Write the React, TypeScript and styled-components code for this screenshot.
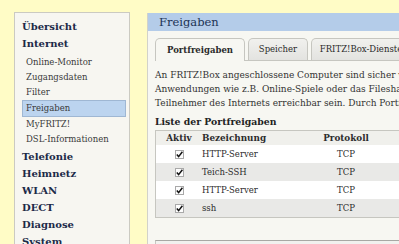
import React from "react";
import styled, { createGlobalStyle } from "styled-components";

const GlobalStyle = createGlobalStyle`
  html, body {
    margin: 0;
    padding: 0;
    background: #fffcc6;
  }
  body {
    font-family: "DejaVu Serif", "Liberation Serif", serif;
    color: #333;
  }
`;

const Page = styled.div`
  width: 399px;
  height: 244px;
  overflow: hidden;
  display: flex;
  align-items: flex-start;
  padding: 12px 0 0 14px;
  box-sizing: border-box;
`;

const Sidebar = styled.nav`
  width: 116px;
  flex-shrink: 0;
  height: 260px;
  box-sizing: border-box;
  background: #f7f6f1;
  border: 1px solid #cbcac2;
  padding: 5px 3px 0 7px;
  margin-right: 17px;
`;

const MainItem = styled.div`
  font-size: 10px;
  font-weight: bold;
  line-height: 17px;
  color: #1c2a48;
`;

const SubList = styled.div`
  margin: 3px 0 1px 0;
`;

const SubItem = styled.div<{ active?: boolean }>`
  font-size: 8.5px;
  line-height: 15px;
  color: #3a3a3a;
  border: ${({ active }) => (active ? "1px solid #9fb7d3" : "none")};
  background: ${({ active }) => (active ? "#bcd4ef" : "transparent")};
  padding-left: ${({ active }) => (active ? "3px" : "4px")};
`;

const Main = styled.section`
  width: 260px;
  flex-shrink: 0;
  margin-top: 1px;
  height: 260px;
  background: #f7f7f2;
  border-left: 1px solid #d2d2ca;
`;

const Header = styled.header`
  height: 18px;
  background: #b4cce9;
  color: #1c3355;
  font-size: 11.5px;
  line-height: 18px;
  padding-left: 11px;
`;

const Body = styled.div`
  padding: 6px 0 0 7px;
`;

const Tabs = styled.div`
  display: flex;
  align-items: flex-end;
  gap: 3px;
  height: 23px;
  border-bottom: 1px solid #c6c6c0;
`;

const Tab = styled.div<{ active?: boolean; width: number }>`
  width: ${({ width }) => width}px;
  flex-shrink: 0;
  height: ${({ active }) => (active ? "23px" : "22px")};
  box-sizing: border-box;
  border: 1px solid #c6c6c0;
  border-bottom: none;
  border-radius: 5px 5px 0 0;
  background: ${({ active }) =>
    active ? "#f7f7f2" : "linear-gradient(#f1f1ee, #e3e3e0)"};
  font-size: 8.5px;
  font-weight: ${({ active }) => (active ? "bold" : "normal")};
  color: #2a2a2a;
  display: flex;
  align-items: center;
  justify-content: center;
  padding-bottom: 1px;
  margin-bottom: ${({ active }) => (active ? "-1px" : "0")};
  white-space: nowrap;
  overflow: hidden;
`;

const Intro = styled.p`
  margin: 7px 0 0 0;
  font-size: 9px;
  line-height: 14px;
  white-space: nowrap;
  color: #333;
`;

const ListTitle = styled.h3`
  margin: 5px 0 0 0;
  font-size: 9.3px;
  line-height: 14px;
  font-weight: bold;
  color: #222;
`;

const Table = styled.div`
  margin-top: 1px;
  width: 300px;
  border: 1px solid #c6c6c0;
  border-right: none;
  background: #fff;
`;

const Row = styled.div<{ shade?: "head" | "odd" | "even" }>`
  display: grid;
  grid-template-columns: 46px 104px 80px 1fr;
  align-items: center;
  height: ${({ shade }) => (shade === "head" ? "14px" : "18px")};
  background: ${({ shade }) =>
    shade === "head" ? "#f0f0ec" : shade === "even" ? "#e9e9e7" : "#ffffff"};
  font-size: ${({ shade }) => (shade === "head" ? "8.8px" : "8.5px")};
  font-weight: ${({ shade }) => (shade === "head" ? "bold" : "normal")};
  color: #2c2c2c;
`;

const Cell = styled.div<{ center?: boolean }>`
  text-align: ${({ center }) => (center ? "center" : "left")};
  white-space: nowrap;
`;

const Check = styled.span`
  display: inline-flex;
  align-items: center;
  justify-content: center;
  width: 9px;
  height: 9px;
  box-sizing: border-box;
  border: 1px solid #a9a9a9;
  background: #fdfdfd;
  vertical-align: middle;
`;

const Next = styled.div`
  margin-top: 22px;
  height: 10px;
  border-top: 1px solid #a8a8a4;
  border-left: 1px solid #c6c6c0;
  background: #f1f1ee;
`;

const rules = [
  { name: "HTTP-Server", proto: "TCP" },
  { name: "Teich-SSH", proto: "TCP" },
  { name: "HTTP-Server", proto: "TCP" },
  { name: "ssh", proto: "TCP" },
];

const CheckMark = () => (
  <Check>
    <svg width="7" height="7" viewBox="0 0 7 7">
      <path d="M0.8 3.6 L2.6 5.6 L6.4 0.8" stroke="#111" strokeWidth="1.5" fill="none" />
    </svg>
  </Check>
);

export default function App() {
  return (
    <>
      <GlobalStyle />
      <Page>
        <Sidebar>
          <MainItem>Übersicht</MainItem>
          <MainItem>Internet</MainItem>
          <SubList>
            <SubItem>Online-Monitor</SubItem>
            <SubItem>Zugangsdaten</SubItem>
            <SubItem>Filter</SubItem>
            <SubItem active>Freigaben</SubItem>
            <SubItem>MyFRITZ!</SubItem>
            <SubItem>DSL-Informationen</SubItem>
          </SubList>
          <MainItem>Telefonie</MainItem>
          <MainItem>Heimnetz</MainItem>
          <MainItem>WLAN</MainItem>
          <MainItem>DECT</MainItem>
          <MainItem>Diagnose</MainItem>
          <MainItem>System</MainItem>
        </Sidebar>
        <Main>
          <Header>Freigaben</Header>
          <Body>
            <Tabs>
              <Tab active width={90}>Portfreigaben</Tab>
              <Tab width={60}>Speicher</Tab>
              <Tab width={100}>FRITZ!Box-Dienste</Tab>
            </Tabs>
            <Intro>
              An FRITZ!Box angeschlossene Computer sind sicher vor unerwünschten Zugriffen aus dem Internet.
              <br />
              Anwendungen wie z.B. Online-Spiele oder das Filesharing-Programm eMule müssen jedoch für andere
              <br />
              Teilnehmer des Internets erreichbar sein. Durch Portfreigaben erlauben Sie solche Verbindungen.
            </Intro>
            <ListTitle>Liste der Portfreigaben</ListTitle>
            <Table>
              <Row shade="head">
                <Cell center>Aktiv</Cell>
                <Cell>Bezeichnung</Cell>
                <Cell center>Protokoll</Cell>
                <Cell />
              </Row>
              {rules.map((r, i) => (
                <Row key={i} shade={i % 2 ? "even" : "odd"}>
                  <Cell center>
                    <CheckMark />
                  </Cell>
                  <Cell>{r.name}</Cell>
                  <Cell center>{r.proto}</Cell>
                  <Cell />
                </Row>
              ))}
            </Table>
            <Next />
          </Body>
        </Main>
      </Page>
    </>
  );
}
